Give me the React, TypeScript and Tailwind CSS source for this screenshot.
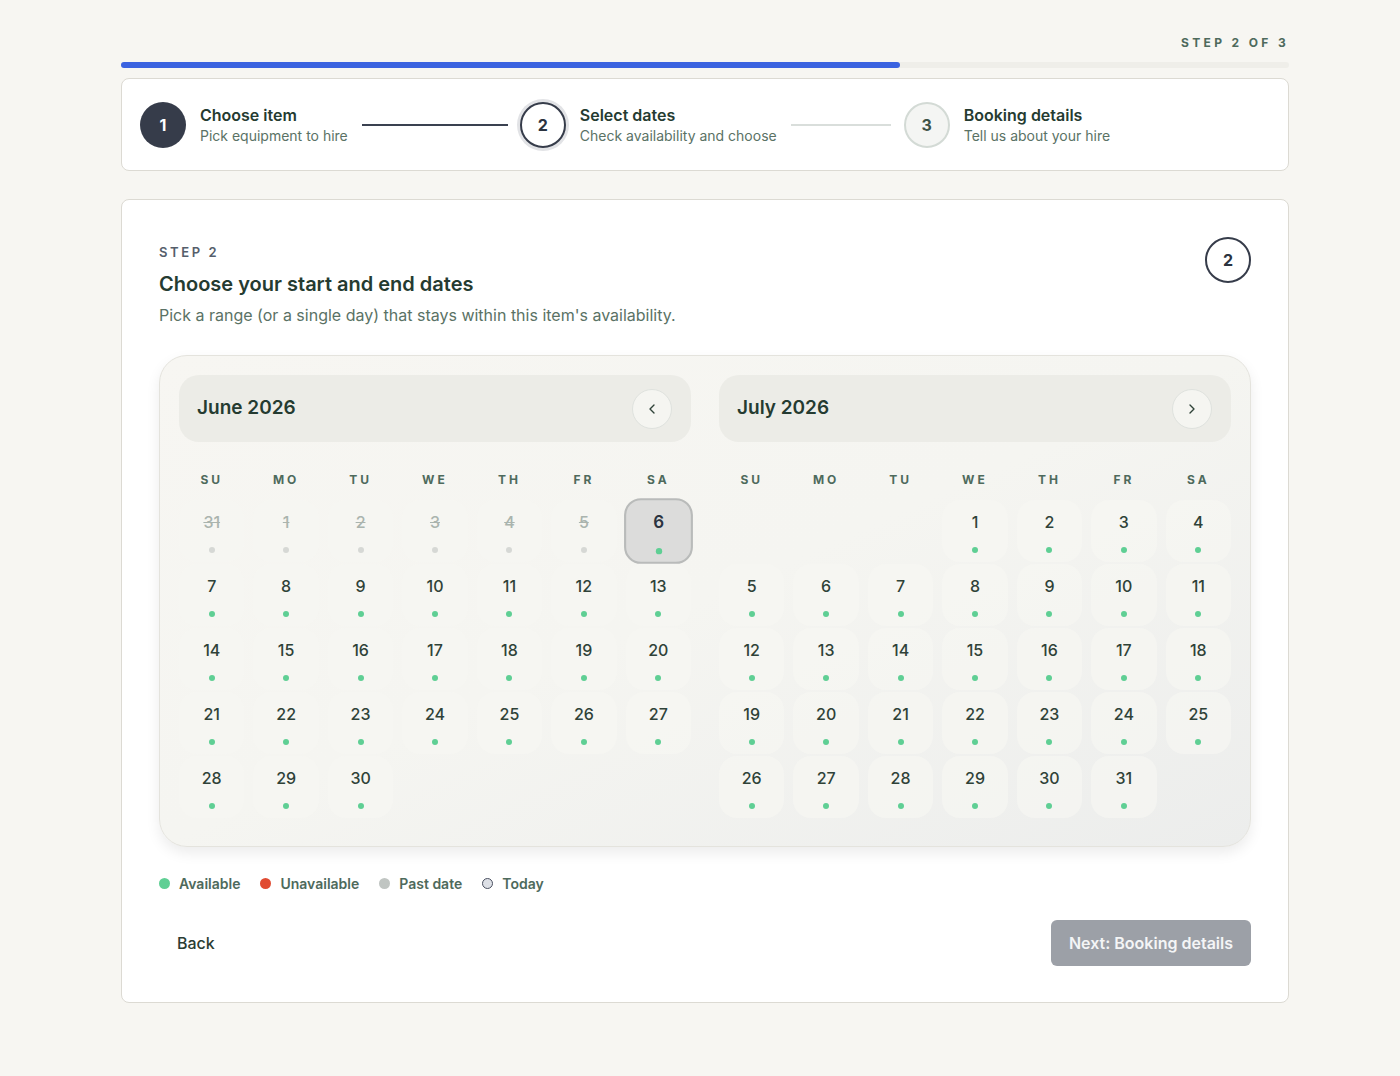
import { ChevronLeft, ChevronRight } from "lucide-react";

type Day = { n: number; past?: boolean; today?: boolean } | null;

const weekdays = ["SU", "MO", "TU", "WE", "TH", "FR", "SA"];

const june: Day[] = [
  { n: 31, past: true },
  { n: 1, past: true },
  { n: 2, past: true },
  { n: 3, past: true },
  { n: 4, past: true },
  { n: 5, past: true },
  { n: 6, today: true },
  ...Array.from({ length: 24 }, (_, i) => ({ n: i + 7 })),
];

const july: Day[] = [null, null, null, ...Array.from({ length: 31 }, (_, i) => ({ n: i + 1 }))];

const DayCell = ({ day }: { day: Day }) => {
  if (!day) return <div className="h-[62px]" />;
  if (day.today) {
    return (
      <div className="flex h-[62px] scale-[1.06] flex-col items-center rounded-[16px] border-2 border-[#b9bbba] bg-[#dcdcdb] pt-[10px]">
        <span className="text-[16px] font-semibold leading-5 text-[#2b3340]">{day.n}</span>
        <span className="mt-[15px] h-[6px] w-[6px] rounded-full bg-[#5fcf94]" />
      </div>
    );
  }
  return (
    <div className="flex h-[62px] flex-col items-center rounded-[18px] bg-[#f7f6f2]/70 pt-[12px]">
      <span
        className={
          day.past
            ? "text-[16px] font-medium leading-5 text-[#aab4ae] line-through"
            : "text-[16px] font-medium leading-5 text-[#2f4238]"
        }
      >
        {day.n}
      </span>
      <span
        className={
          day.past
            ? "mt-[15px] h-[6px] w-[6px] rounded-full bg-[#d6d8d5]"
            : "mt-[15px] h-[6px] w-[6px] rounded-full bg-[#5fcf94]"
        }
      />
    </div>
  );
};

const Month = ({ title, days, next }: { title: string; days: Day[]; next?: boolean }) => (
  <div className="flex-1">
    <div className="flex h-[67px] items-center justify-between rounded-[20px] bg-[#ecece7] pl-[18px] pr-[19px]">
      <span className="text-[19px] font-semibold text-[#253b31]">{title}</span>
      <button className="flex h-[40px] w-[40px] items-center justify-center rounded-full border border-[#dfe2de] bg-[#f5f5f1] text-[#2f4238]">
        {next ? <ChevronRight size={16} strokeWidth={2} /> : <ChevronLeft size={16} strokeWidth={2} />}
      </button>
    </div>
    <div className="mt-[30px] grid grid-cols-7 gap-x-[9px]">
      {weekdays.map((w) => (
        <div key={w} className="text-center text-[12px] font-bold leading-4 tracking-[0.25em] text-[#4e6a5c]">
          {w}
        </div>
      ))}
    </div>
    <div className="mt-[12px] grid grid-cols-7 gap-x-[9px] gap-y-[2px]">
      {days.map((d, i) => (
        <DayCell key={i} day={d} />
      ))}
    </div>
  </div>
);

const Step = ({
  num,
  title,
  sub,
  state,
}: {
  num: number;
  title: string;
  sub: string;
  state: "done" | "current" | "todo";
}) => {
  const circle =
    state === "done"
      ? "bg-[#363c4a] text-white"
      : state === "current"
        ? "border-2 border-[#363c4a] bg-white text-[#2b3340] ring-[3px] ring-[#e2e3e6]"
        : "border-2 border-[#d3dad5] bg-[#f4f5f3] text-[#3e5247]";
  return (
    <div className="flex items-center gap-[14px]">
      <div className={`flex h-[46px] w-[46px] items-center justify-center rounded-full text-[16px] font-bold ${circle}`}>
        {num}
      </div>
      <div>
        <div className="mt-[1px] text-[16px] font-semibold leading-5 text-[#253b31]">{title}</div>
        <div className="mt-[1px] text-[14px] leading-5 text-[#5a7265]">{sub}</div>
      </div>
    </div>
  );
};

export default function App() {
  return (
    <div className="min-h-[1076px] bg-[#f7f6f2] pb-[74px] pt-[35px] font-['Inter',sans-serif]">
      <div className="ml-[121px] w-[1168px]">
        <div className="text-right text-[12px] font-bold leading-4 tracking-[0.28em] text-[#4e6a5c]">STEP 2 OF 3</div>
        <div className="mt-[11px] h-[6px] w-full rounded-full bg-[#efeee9]">
          <div className="h-full w-[66.7%] rounded-full bg-[#3b63e0]" />
        </div>

        <div className="mt-[10px] flex h-[93px] items-center rounded-[8px] border border-[#dcdad3] bg-white pl-[18px] pr-[20px]">
          <Step num={1} title="Choose item" sub="Pick equipment to hire" state="done" />
          <div className="ml-[14px] mr-[12px] h-[2px] w-[146px] bg-[#3a4150]" />
          <Step num={2} title="Select dates" sub="Check availability and choose" state="current" />
          <div className="ml-[14px] mr-[13px] h-[2px] w-[100px] bg-[#d9dedb]" />
          <Step num={3} title="Booking details" sub="Tell us about your hire" state="todo" />
        </div>

        <div className="mt-[28px] rounded-[8px] border border-[#dcdad3] bg-white px-[37px] pb-[36px] pt-[44px]">
          <div className="flex items-start justify-between">
            <div>
              <div className="text-[13px] font-semibold leading-4 tracking-[0.2em] text-[#555e6b]">STEP 2</div>
              <h1 className="mt-[10px] text-[20px] font-semibold leading-7 text-[#253b31]">
                Choose your start and end dates
              </h1>
              <p className="mt-[5px] text-[16px] leading-6 text-[#5a7265]">
                Pick a range (or a single day) that stays within this item's availability.
              </p>
            </div>
            <div className="-mt-[7px] flex h-[46px] w-[46px] items-center justify-center rounded-full border-2 border-[#363c4a] bg-white text-[16px] font-bold text-[#2b3340]">
              2
            </div>
          </div>

          <div className="mt-[28px] flex gap-[28px] rounded-[28px] border border-[#e4e3dd] bg-gradient-to-br from-[#f7f6f2] via-[#f5f5f1] to-[#ecedec] px-[19px] pb-[28px] pt-[19px] shadow-[0_6px_14px_rgba(0,0,0,0.08)]">
            <Month title="June 2026" days={june} />
            <Month title="July 2026" days={july} next />
          </div>

          <div className="mt-[26px] flex items-center gap-[20px] text-[14px] font-semibold text-[#4e6a5c]">
            <div className="flex items-center gap-[9px]">
              <span className="h-[11px] w-[11px] rounded-full bg-[#5fcf94]" />
              Available
            </div>
            <div className="flex items-center gap-[9px]">
              <span className="h-[11px] w-[11px] rounded-full bg-[#e04b32]" />
              Unavailable
            </div>
            <div className="flex items-center gap-[9px]">
              <span className="h-[11px] w-[11px] rounded-full bg-[#c0c5c2]" />
              Past date
            </div>
            <div className="flex items-center gap-[9px]">
              <span className="h-[11px] w-[11px] rounded-full border-[1.5px] border-[#4a5060] bg-[#dde0e6]" />
              Today
            </div>
          </div>

          <div className="mt-[26px] flex items-center justify-between">
            <button className="px-[18px] text-[16px] font-medium text-[#2b3d33]">Back</button>
            <button className="h-[46px] rounded-[6px] bg-[#9ca0a7] px-[18px] text-[16px] font-semibold text-[#f4f5f6]">
              Next: Booking details
            </button>
          </div>
        </div>
      </div>
    </div>
  );
}
